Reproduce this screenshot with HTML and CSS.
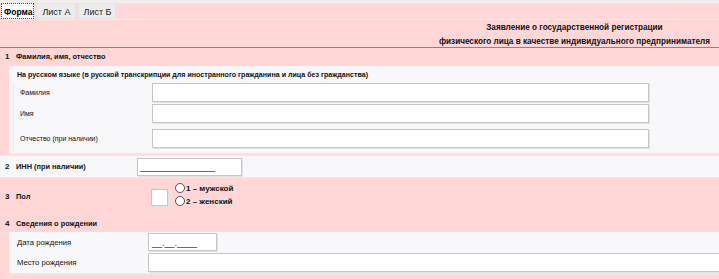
FILE: index.html
```html
<!DOCTYPE html>
<html lang="ru">
<head>
<meta charset="utf-8">
<link rel="stylesheet" href="styles.css">
</head>
<body>
<div class="tabs">
  <span class="tab active">Форма</span>
  <span class="tab">Лист А</span>
  <span class="tab">Лист Б</span>
</div>
<div class="header">
  <div class="title">Заявление о государственной регистрации<br>физического лица в качестве индивидуального предпринимателя</div>
</div>
<div class="sec pink">
  <div class="sec-head"><span class="num">1</span>Фамилия, имя, отчество</div>
  <div class="panel p1">
    <div class="sub-head">На русском языке (в русской транскрипции для иностранного гражданина и лица без гражданства)</div>
    <div class="inner">
      <div class="row r-fam"><span class="lbl">Фамилия</span><span class="inp wide"></span></div>
      <div class="row r-name"><span class="lbl">Имя</span><span class="inp wide"></span></div>
      <div class="row r-otch"><span class="lbl">Отчество (при наличии)</span><span class="inp wide"></span></div>
    </div>
  </div>
</div>
<div class="inn-row">
  <span class="num">2</span><span class="inn-lbl">ИНН (при наличии)</span><span class="inp inn">_______________</span>
</div>
<div class="pol-row pink">
  <span class="num">3</span><span class="pol-lbl">Пол</span>
  <span class="inp box"></span>
  <div class="radios">
    <label class="radio"><span class="circle"></span>1 – мужской</label>
    <label class="radio"><span class="circle"></span>2 – женский</label>
  </div>
</div>
<div class="sec pink sec4">
  <div class="sec-head"><span class="num">4</span>Сведения о рождении</div>
  <div class="panel p4">
    <div class="row r-date"><span class="lbl">Дата рождения</span><span class="inp date">__.__.____</span></div>
    <div class="row r-place"><span class="lbl">Место рождения</span><span class="inp full"></span></div>
  </div>
</div>
</body>
</html>
```
FILE: styles.css
```css
* { box-sizing: border-box; }
html, body { margin: 0; padding: 0; background: #ffd7d7; }
body {
  font-family: "Liberation Sans", Arial, sans-serif;
  font-size: 7.4px;
  color: #111;
  width: 719px;
  overflow: hidden;
}
.pink { background: #ffd7d7; }

.tabs {
  height: 20px;
  border-top: 3px solid #f3eeee;
  display: flex;
  gap: 2px;
  padding-left: 1px;
  align-items: stretch;
  background: #ffd9d9;
  border-bottom: 1px solid #ffe6e6;
}
.tab {
  background: #ececec;
  padding: 0 4px 0 5px;
  line-height: 16px;
  font-size: 9px;
  color: #222;
  border: 1px solid #e4e4e4;
}
.tab.active {
  background: #fff;
  font-weight: bold;
  border: 1px dotted #444;
  padding: 0 1px 0 2px;
  color: #000;
  font-size: 8.5px;
}
.header {
  height: 28px;
  border-bottom: 1px solid #c96b6b;
  display: flex;
  justify-content: flex-end;
  padding-right: 9px;
}
.title {
  font-size: 8.2px;
  text-align: center;
  font-weight: bold;
  line-height: 14px;
  padding-top: 1px;
}

.sec-head {
  font-weight: bold;
  height: 18px;
  line-height: 18px;
  padding-left: 5px;
}
.num { display: inline-block; width: 11px; font-weight: bold; font-size: 8px; }

.panel {
  margin-left: 9px;
  background: #f8f8fb;
  border-bottom: 2px solid #ffe0e0;
}
.p1 { height: 89px; padding-top: 4px; }
.sub-head { font-weight: bold; padding-left: 8px; line-height: 11px; height: 13px; font-size: 7.1px; }
.inner {
  margin-left: 4px;
  border-left: 1px solid #e6e9f2;
  height: 68px;
}
.row { display: flex; align-items: center; }
.lbl { display: block; }
.inp {
  display: block;
  background: #fff;
  border: 1px solid #c6c6c6;
  box-shadow: 1px 1px 0 #e2e2e2;
}
.p1 .lbl { width: 138px; padding-left: 6px; font-size: 7px; }
.wide { width: 497px; height: 19px; }
.r-name { margin-top: 2px; }
.r-otch { margin-top: 6px; }

.inn-row {
  background: #f8f8fb;
  height: 23px;
  display: flex;
  align-items: center;
  padding-left: 5px;
  border-top: 1px solid #ffe0e0;
  border-bottom: 1px solid #fbe1e4;
}
.inn-lbl { font-weight: bold; width: 121px; }
.inp.inn { width: 105px; height: 18px; line-height: 16px; padding-left: 2px; font-size: 9px; overflow: hidden; }

.pol-row {
  height: 37px;
  display: flex;
  align-items: center;
  padding-left: 5px;
}
.pol-lbl { font-weight: bold; width: 135px; }
.inp.box { width: 17px; height: 17px; margin-top: 2px; }
.radios { display: flex; flex-direction: column; margin-left: 7px; margin-top: -4px; gap: 0; }
.radio { display: flex; align-items: center; font-weight: bold; height: 13px; font-size: 8px; }
.circle {
  width: 10px; height: 10px; border-radius: 50%;
  border: 1px solid #555; background: #fff; margin-right: 1px;
}
.sec4 .sec-head { height: 17px; line-height: 17px; }
.p4 { height: 43px; padding-top: 1px; border-bottom: 2px solid #ffe0e0; }
.p4 .lbl { width: 139px; padding-left: 8px; font-size: 7.7px; }
.inp.date { width: 69px; height: 18px; line-height: 18px; padding-left: 3px; font-size: 9px; }
.r-place { margin-top: 2px; }
.inp.full { flex: 1; height: 19px; border-right: none; }
```
